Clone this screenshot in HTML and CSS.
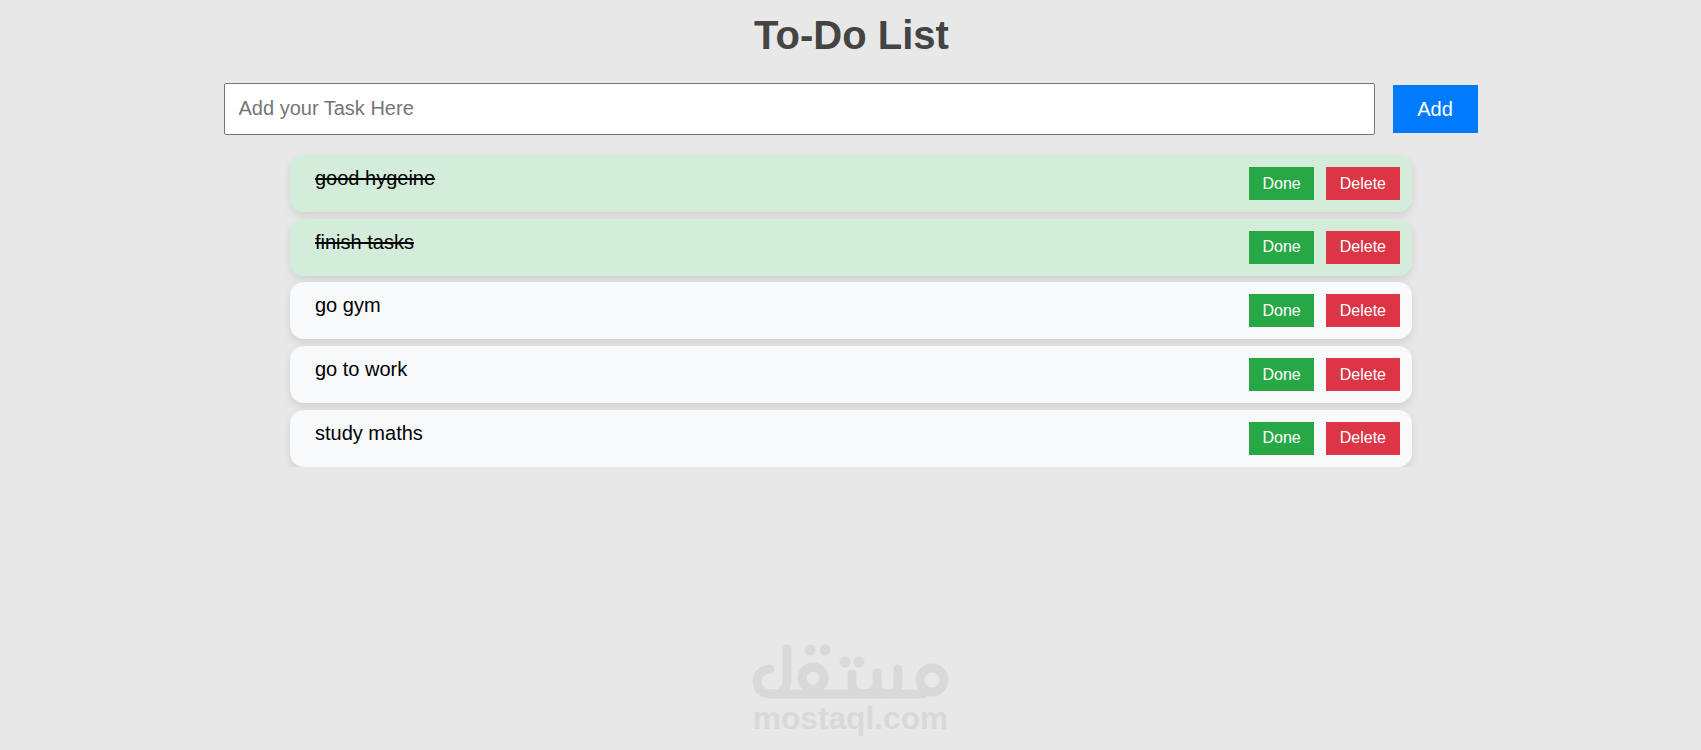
FILE: index.html
```html
<!DOCTYPE html>
<html lang="en">
<head>
    <meta charset="UTF-8">
    <meta name="viewport" content="width=device-width, initial-scale=1.0">
    <title>To-Do List</title>
    <link rel="stylesheet" href="styles.css">
</head>
<body>

<div class="container">
    <h1>To-Do List</h1>

    <!-- add task -->
    <div class="task-form">
        <input type="text" class="task-input" placeholder="Add your Task Here">
        <button class="add-btn">Add</button>
    </div>

    <!-- tasks -->
    <ul class="task-list">
        <li class="task completed">
            <span class="task-name">good hygeine</span>
            <div class="task-actions">
                <button class="done-btn">Done</button>
                <button class="delete-btn">Delete</button>
            </div>
        </li>
        <li class="task completed">
            <span class="task-name">finish tasks</span>
            <div class="task-actions">
                <button class="done-btn">Done</button>
                <button class="delete-btn">Delete</button>
            </div>
        </li>
        <li class="task">
            <span class="task-name">go gym</span>
            <div class="task-actions">
                <button class="done-btn">Done</button>
                <button class="delete-btn">Delete</button>
            </div>
        </li>
        <li class="task">
            <span class="task-name">go to work</span>
            <div class="task-actions">
                <button class="done-btn">Done</button>
                <button class="delete-btn">Delete</button>
            </div>
        </li>
        <li class="task">
            <span class="task-name">study maths</span>
            <div class="task-actions">
                <button class="done-btn">Done</button>
                <button class="delete-btn">Delete</button>
            </div>
        </li>
    </ul>
</div>

<!-- watermark -->
<div class="watermark">
    <svg class="watermark-logo" viewBox="0 0 200 62" width="200" height="62" aria-label="mostaql logo">
        <g fill="none" stroke="#d9d9d9" stroke-width="9" stroke-linecap="round" stroke-linejoin="round">
            <path d="M36 9 V40 Q36 54 21 54 Q6 54 6 41 Q6 31 19 29"/>
            <path d="M21 54 H172"/>
            <circle cx="62" cy="38" r="11"/>
            <path d="M101 34 V44 Q101 54 113 54 Q126 54 126 44 V33"/>
            <path d="M126 44 Q126 54 136 54 Q147 54 147 44 V29"/>
            <circle cx="181" cy="40" r="12"/>
        </g>
        <g fill="#d9d9d9">
            <circle cx="59" cy="10" r="5.5"/>
            <circle cx="74" cy="10" r="5.5"/>
            <circle cx="94" cy="22" r="5.5"/>
            <circle cx="108" cy="22" r="5.5"/>
        </g>
    </svg>
    <div class="watermark-text">mostaql.com</div>
</div>

</body>
</html>
```

FILE: styles.css
```css
/* general */
body {
    margin: 0;
    padding: 0;
    font-family: "Liberation Sans", Arial, sans-serif;
    background-color: #e8e8e8;
}

.container {
    width: 1254px;
    margin: 0 auto;
}

h1 {
    margin: 0;
    padding: 12px 0 0 2px;
    height: 83px;
    box-sizing: border-box;
    font-size: 40px;
    line-height: 46px;
    text-align: center;
    color: #444;
}

/* add task */
.task-form {
    display: flex;
    align-items: center;
    gap: 18px;
    margin-bottom: 20px;
}

.task-input {
    flex: 1;
    height: 52px;
    box-sizing: border-box;
    padding: 0 14px 2px;
    border: 1px solid #767676;
    border-radius: 2px;
    background: #fff;
    font-family: inherit;
    font-size: 20px;
}

.task-input::placeholder {
    color: #757575;
}

.add-btn {
    width: 85px;
    height: 48px;
    border: none;
    background-color: #007bff;
    color: #fff;
    font-family: inherit;
    font-size: 20px;
}

/* tasks */
.task-list {
    list-style: none;
    margin: 0 auto;
    padding: 0;
    width: 1122px;
    display: flex;
    flex-direction: column;
    gap: 6.7px;
}

.task {
    display: flex;
    justify-content: space-between;
    align-items: flex-start;
    height: 57px;
    box-sizing: border-box;
    padding: 12px 12px 12px 25.5px;
    border-radius: 14px;
    background-color: #f8f9fa;
    box-shadow: 0 4px 8px rgba(0, 0, 0, 0.1);
    font-size: 20px;
    line-height: 23px;
    color: #000;
}

.task.completed {
    background-color: #d4edda;
}

.task.completed .task-name {
    text-decoration: line-through;
}

.task-actions {
    display: flex;
    gap: 12px;
}

.task-actions button {
    height: 33px;
    padding: 0 13.5px;
    border: none;
    color: #fff;
    font-family: inherit;
    font-size: 16px;
}

.done-btn {
    background-color: #28a745;
}

.delete-btn {
    background-color: #dc3545;
}

/* sits on top of the page, bottom centre */
.watermark {
    position: absolute;
    left: 0;
    right: 0;
    top: 640px;
    display: flex;
    flex-direction: column;
    align-items: center;
}

.watermark-logo {
    display: block;
}

.watermark-text {
    margin-top: -2px;
    font-size: 31.7px;
    line-height: 36px;
    font-weight: bold;
    color: #d9d9d9;
}
```
